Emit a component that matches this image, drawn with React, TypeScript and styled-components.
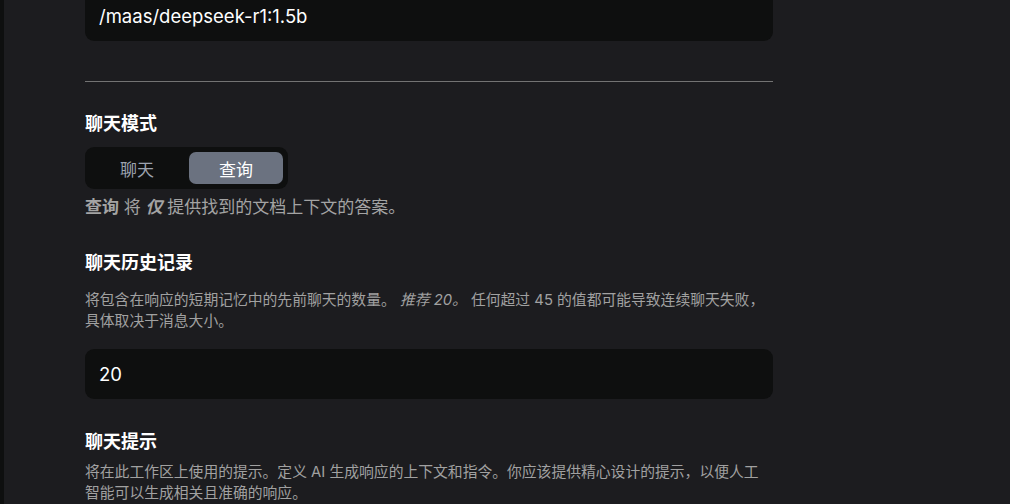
import React from "react";
import styled, { createGlobalStyle } from "styled-components";

const Global = createGlobalStyle`
  html, body { margin: 0; padding: 0; background: #1c1c1f; }
  body { font-family: Inter, "Noto Sans CJK SC", sans-serif; overflow: hidden; }
  * { box-sizing: border-box; }
`;

const Page = styled.div`
  display: flex;
  width: 1010px;
  height: 504px;
  overflow: hidden;
  background: #1c1c1f;
`;

const SideEdge = styled.div`
  width: 4px;
  flex: none;
  background: #0e0f0f;
`;

const Content = styled.div`
  width: 688px;
  margin-left: 81px;
  margin-top: -9px;
  display: flex;
  flex-direction: column;
`;

const TextBox = styled.div`
  height: 50px;
  border-radius: 9px;
  background: #0e0f0f;
  color: #ffffff;
  font-family: Inter, "Noto Sans CJK SC", sans-serif;
  font-size: 18.5px;
  display: flex;
  align-items: center;
  padding: 0 14px;
`;

const Divider = styled.hr`
  margin: 40px 0 0 0;
  border: none;
  height: 1px;
  background: #737373;
`;

const Heading = styled.h3<{ $top: number }>`
  margin: ${(p) => p.$top}px 0 0 0;
  font-family: Inter, "Noto Sans CJK SC", sans-serif;
  font-size: 18px;
  font-weight: 700;
  line-height: 24px;
  color: #ffffff;
`;

const Toggle = styled.div`
  margin-top: 11px;
  width: 203px;
  height: 43px;
  padding: 5px;
  gap: 5px;
  border-radius: 9px;
  background: #0e0f0f;
  display: flex;
`;

const ToggleBtn = styled.div<{ $active?: boolean }>`
  flex: 1;
  border-radius: 7px;
  display: flex;
  align-items: center;
  justify-content: center;
  font-family: "Noto Sans CJK SC", sans-serif;
  font-size: 17px;
  color: ${(p) => (p.$active ? "#ffffff" : "#9ca3af")};
  background: ${(p) => (p.$active ? "#6b7280" : "transparent")};
`;

const ModeNote = styled.p`
  margin: 6px 0 0 0;
  font-family: Inter, "Noto Sans CJK SC", sans-serif;
  font-size: 17px;
  line-height: 24px;
  color: #a3a3a3;
`;

const Strong = styled.b<{ $italic?: boolean }>`
  font-weight: 700;
  font-style: ${(p) => (p.$italic ? "italic" : "normal")};
`;

const Help = styled.p<{ $top: number }>`
  margin: ${(p) => p.$top}px 0 0 0;
  font-family: Inter, "Noto Sans CJK SC", sans-serif;
  font-size: 14.8px;
  line-height: 21px;
  color: #a1a1a1;
`;

const Em = styled.i`
  font-style: italic;
`;

const NumberBox = styled(TextBox)`
  margin-top: 17px;
`;

export default function App() {
  return (
    <>
      <Global />
      <Page>
        <SideEdge />
        <Content>
          <TextBox>/maas/deepseek-r1:1.5b</TextBox>
          <Divider />
          <Heading $top={30}>聊天模式</Heading>
          <Toggle>
            <ToggleBtn>聊天</ToggleBtn>
            <ToggleBtn $active>查询</ToggleBtn>
          </Toggle>
          <ModeNote>
            <Strong>查询</Strong> 将 <Strong $italic>仅</Strong> 提供找到的文档上下文的答案。
          </ModeNote>
          <Heading $top={32}>聊天历史记录</Heading>
          <Help $top={15}>
            将包含在响应的短期记忆中的先前聊天的数量。 <Em>推荐 20。</Em> 任何超过 45 的值都可能导致连续聊天失败，具体取决于消息大小。
          </Help>
          <NumberBox>20</NumberBox>
          <Heading $top={31}>聊天提示</Heading>
          <Help $top={8}>
            将在此工作区上使用的提示。定义 AI 生成响应的上下文和指令。你应该提供精心设计的提示，以便人工智能可以生成相关且准确的响应。
          </Help>
        </Content>
      </Page>
    </>
  );
}
